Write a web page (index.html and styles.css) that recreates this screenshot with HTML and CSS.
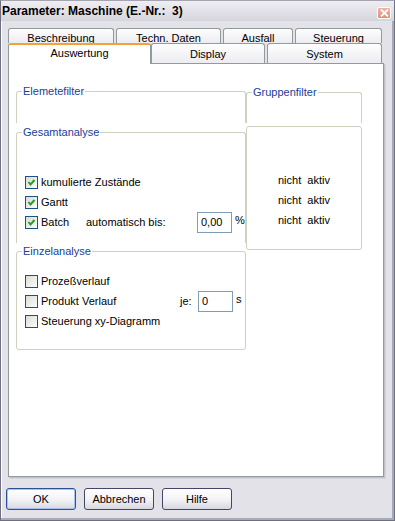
FILE: index.html
```html
<!DOCTYPE html>
<html lang="de">
<head>
    <meta charset="UTF-8">
    <title>Parameter: Maschine</title>
    <link rel="stylesheet" href="styles.css">
</head>
<body>
<div class="window">
    <div class="titlebar">
        <span class="title">Parameter: Maschine (E.-Nr.:&nbsp; 3)</span>
        <span class="close">
            <svg width="9" height="8" viewBox="0 0 9 8"><path d="M1 0.5 L8 7.5 M8 0.5 L1 7.5" stroke="#fff" stroke-width="1.8" fill="none"/></svg>
        </span>
    </div>
    <div class="content">
        <div class="tabs">
            <div class="tab-row back">
                <div class="tab t-beschreibung">Beschreibung</div>
                <div class="tab t-techn">Techn. Daten</div>
                <div class="tab t-ausfall">Ausfall</div>
                <div class="tab t-steuerung">Steuerung</div>
            </div>
            <div class="tab-row front">
                <div class="tab active t-auswertung">Auswertung</div>
                <div class="tab t-display">Display</div>
                <div class="tab t-system">System</div>
            </div>
        </div>

        <div class="panel">
            <div class="col-left">
                <fieldset class="group open elemente">
                    <legend>Elemetefilter</legend>
                </fieldset>

                <fieldset class="group open gesamt">
                    <legend>Gesamtanalyse</legend>
                    <div class="row">
                        <span class="cb checked"><svg width="11" height="11" viewBox="0 0 11 11"><path d="M2.5 5 L4.5 7.5 L8.5 3" stroke="#21a121" stroke-width="2" fill="none"/></svg></span>
                        <span>kumulierte Zustände</span>
                    </div>
                    <div class="row">
                        <span class="cb checked"><svg width="11" height="11" viewBox="0 0 11 11"><path d="M2.5 5 L4.5 7.5 L8.5 3" stroke="#21a121" stroke-width="2" fill="none"/></svg></span>
                        <span>Gantt</span>
                    </div>
                    <div class="row">
                        <span class="cb checked"><svg width="11" height="11" viewBox="0 0 11 11"><path d="M2.5 5 L4.5 7.5 L8.5 3" stroke="#21a121" stroke-width="2" fill="none"/></svg></span>
                        <span class="lbl-batch">Batch</span>
                        <span class="lbl-auto">automatisch bis:</span>
                        <span class="field">0,00</span>
                        <span class="unit">%</span>
                    </div>
                </fieldset>

                <fieldset class="group einzel">
                    <legend>Einzelanalyse</legend>
                    <div class="row">
                        <span class="cb"></span>
                        <span>Prozeßverlauf</span>
                    </div>
                    <div class="row">
                        <span class="cb"></span>
                        <span class="lbl-produkt">Produkt Verlauf</span>
                        <span class="lbl-je">je:</span>
                        <span class="field">0</span>
                        <span class="unit">s</span>
                    </div>
                    <div class="row">
                        <span class="cb"></span>
                        <span>Steuerung xy-Diagramm</span>
                    </div>
                </fieldset>
            </div>

            <div class="col-right">
                <fieldset class="group open gruppen">
                    <legend>Gruppenfilter</legend>
                </fieldset>
                <div class="status">
                    <div>nicht&nbsp; aktiv</div>
                    <div>nicht&nbsp; aktiv</div>
                    <div>nicht&nbsp; aktiv</div>
                </div>
            </div>
        </div>

        <div class="buttons">
            <button class="btn default">OK</button>
            <button class="btn">Abbrechen</button>
            <button class="btn">Hilfe</button>
        </div>
    </div>
</div>
</body>
</html>
```

FILE: styles.css
```css
* {
    box-sizing: border-box;
}

body {
    margin: 0;
    font-family: "Liberation Sans", Arial, sans-serif;
    font-size: 11px;
    color: #000;
    background: #e3e2e8;
}

.window {
    width: 395px;
    height: 521px;
    border: 1px solid #6f6f82;
    border-top-color: #a4a4b2;
    background: #e3e2e8;
    box-shadow: inset -2px -2px 0 #a9a9b8, inset 1px 0 0 #fff;
}

.titlebar {
    height: 20px;
    display: flex;
    align-items: center;
    justify-content: space-between;
    padding: 0 3px 0 1px;
    background: linear-gradient(#eeeef2, #d6d5dd);
}

.title {
    font-weight: bold;
    font-size: 12px;
}

.close {
    width: 14px;
    height: 12px;
    margin-top: 3px;
    background: linear-gradient(#f0b3a6, #e08d7c);
    border: 1px solid #fff;
    border-radius: 2px;
    display: flex;
    align-items: center;
    justify-content: center;
}

.content {
    padding: 7px 0 0 7px;
}

/* Reiter */
.tab-row {
    display: flex;
}

.tab {
    border: 1px solid #919b9c;
    border-bottom: none;
    border-radius: 3px 3px 0 0;
    background: linear-gradient(#fefefe, #ececf1);
    text-align: center;
    white-space: nowrap;
}

.back {
    gap: 2px;
    height: 15px;
}

.back .tab {
    height: 15px;
    padding-top: 3px;
    line-height: 13px;
}

.front .tab {
    height: 20px;
    line-height: 21px;
}

.t-beschreibung { width: 106px; }
.t-techn { width: 105px; }
.t-ausfall { width: 70px; }
.t-steuerung { width: 87px; }
.t-auswertung { width: 143px; }
.t-display { width: 114px; }
.t-system { width: 115px; margin-left: 2px; }

.tab.active {
    background: #fff;
    border-top: 2px solid #f1a23a;
    height: 21px;
    line-height: 17px;
    margin-bottom: -1px;
    position: relative;
    z-index: 1;
}

/* Seite */
.panel {
    width: 376px;
    height: 414px;
    background: #fff;
    border: 1px solid #919b9c;
    box-shadow: 1px 1px 0 #c3c2ca, 2px 2px 0 #d4d3db;
    padding: 21px 0 0 7px;
    display: flex;
    align-items: flex-start;
}

.col-left {
    width: 230px;
}

.col-right {
    width: 116px;
}

.group {
    margin: 0;
    padding: 0;
    border: 1px solid #d0d0bf;
    border-radius: 3px;
    min-width: 0;
}

.group legend {
    color: #1c3d94;
    padding: 0 1px;
    margin-left: 5px;
    line-height: 13px;
}

.open {
    border-bottom: none;
    border-bottom-left-radius: 0;
    border-bottom-right-radius: 0;
}

.elemente {
    height: 38px;
}

.gesamt {
    height: 117px;
    margin-top: 3px;
    padding-top: 33px;
}

.einzel {
    height: 105px;
    margin-top: 2px;
    padding-top: 13px;
}

.gruppen {
    height: 37px;
    margin-top: 1px;
}

.status {
    height: 124px;
    margin-top: 3px;
    border: 1px solid #d0d0bf;
    border-radius: 3px;
    padding: 43px 0 0 31px;
    line-height: 20px;
}

.row {
    display: flex;
    align-items: center;
    height: 20px;
    padding-left: 8px;
}

.cb {
    width: 13px;
    height: 13px;
    border: 1px solid #1c5180;
    background: linear-gradient(135deg, #dcdcd6, #fbfbf9);
    margin-right: 3px;
    display: flex;
    align-items: center;
    justify-content: center;
}

.lbl-batch { width: 45px; }
.lbl-auto { width: 111px; }
.lbl-produkt { width: 139px; }
.lbl-je { width: 18px; }

.field {
    width: 35px;
    height: 21px;
    border: 1px solid #7f9db9;
    background: #fff;
    padding-left: 3px;
    line-height: 19px;
}

.unit {
    margin-left: 3px;
    margin-top: -4px;
}

/* Schaltflächen */
.buttons {
    display: flex;
    gap: 8px;
    margin: 11px 0 0 -2px;
}

.btn {
    width: 70px;
    height: 22px;
    padding: 0;
    font: inherit;
    color: #000;
    border: 1px solid #45456a;
    border-radius: 3px;
    background: linear-gradient(#ffffff, #f2f2f5 55%, #d8d7e0);
}

.btn.default {
    border-color: #2d4f9a;
    box-shadow: inset 0 0 0 1px #a9c3ee;
}
```
